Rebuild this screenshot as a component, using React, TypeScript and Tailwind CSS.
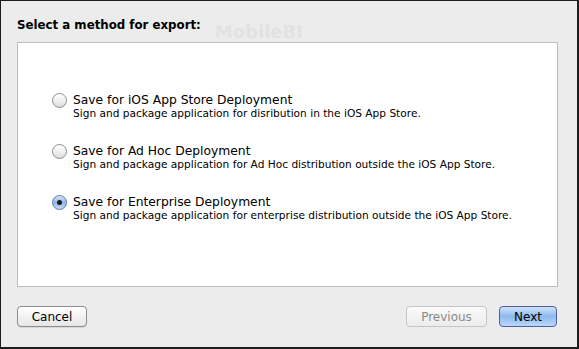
import { useState } from "react";

const options = [
  {
    id: "appstore",
    title: "Save for iOS App Store Deployment",
    desc: "Sign and package application for disribution in the iOS App Store.",
  },
  {
    id: "adhoc",
    title: "Save for Ad Hoc Deployment",
    desc: "Sign and package application for Ad Hoc distribution outside the iOS App Store.",
  },
  {
    id: "enterprise",
    title: "Save for Enterprise Deployment",
    desc: "Sign and package application for enterprise distribution outside the iOS App Store.",
  },
];

function Radio({ checked }: { checked: boolean }) {
  return (
    <span
      className={`relative flex items-center justify-center w-[15px] h-[15px] rounded-full border shrink-0 ${
        checked
          ? "border-[#5a7bb0] bg-gradient-to-b from-[#d6e6f8] via-[#8fb6e6] to-[#c8dcf4]"
          : "border-[#8e8e8e] bg-gradient-to-b from-[#ffffff] via-[#f0f0f0] to-[#dcdcdc]"
      }`}
    >
      {checked && <span className="w-[5px] h-[5px] rounded-full bg-[#1a1a1a]" />}
    </span>
  );
}

export default function App() {
  const [selected, setSelected] = useState("enterprise");

  return (
    <div
      className="w-[579px] h-[349px] bg-[#ececec] border-t border-l border-b-2 border-r-2 border-[#1c1c1c] flex flex-col text-black"
      style={{ fontFamily: '"DejaVu Sans", "Liberation Sans", sans-serif' }}
    >
      <div className="flex items-end h-[32px] pl-[16px]">
        <span className="text-[11.8px] font-bold leading-none pb-[1px]">Select a method for export:</span>
        <span className="ml-[14px] text-[18px] font-bold text-[#e2e2e2] leading-none -mb-[8px]">MobileBI</span>
      </div>

      <div className="mt-[9px] ml-[16px] w-[541px] h-[245px] bg-white border border-[#bdbdbd] flex flex-col pt-[50px] pl-[34px] gap-[25px]">
        {options.map((opt) => (
          <div
            key={opt.id}
            className="flex items-start gap-[6px] cursor-default"
            onClick={() => setSelected(opt.id)}
          >
            <Radio checked={selected === opt.id} />
            <div className="flex flex-col">
              <span className="text-[12.3px] leading-[14px]">{opt.title}</span>
              <span className="text-[10.6px] leading-[12px]">{opt.desc}</span>
            </div>
          </div>
        ))}
      </div>

      <div className="flex items-center mt-[19px] pl-[16px] pr-[20px]">
        <button className="w-[70px] h-[21px] rounded-[4px] border border-[#8c8c8c] bg-gradient-to-b from-white to-[#e6e6e6] text-[12px] leading-none shadow-[0_1px_0_rgba(0,0,0,0.08)]">
          Cancel
        </button>
        <div className="flex-1" />
        <button
          disabled
          className="w-[81px] h-[21px] rounded-[4px] border border-[#c6c6c6] bg-gradient-to-b from-[#fafafa] to-[#ececec] text-[12px] leading-none text-[#8a8a8a]"
        >
          Previous
        </button>
        <button className="ml-[12px] w-[58px] h-[21px] rounded-[4px] border border-[#4f5f9a] bg-gradient-to-b from-[#cfe1f8] via-[#8dbaf0] to-[#bcd8fa] text-[12px] leading-none">
          Next
        </button>
      </div>
    </div>
  );
}
